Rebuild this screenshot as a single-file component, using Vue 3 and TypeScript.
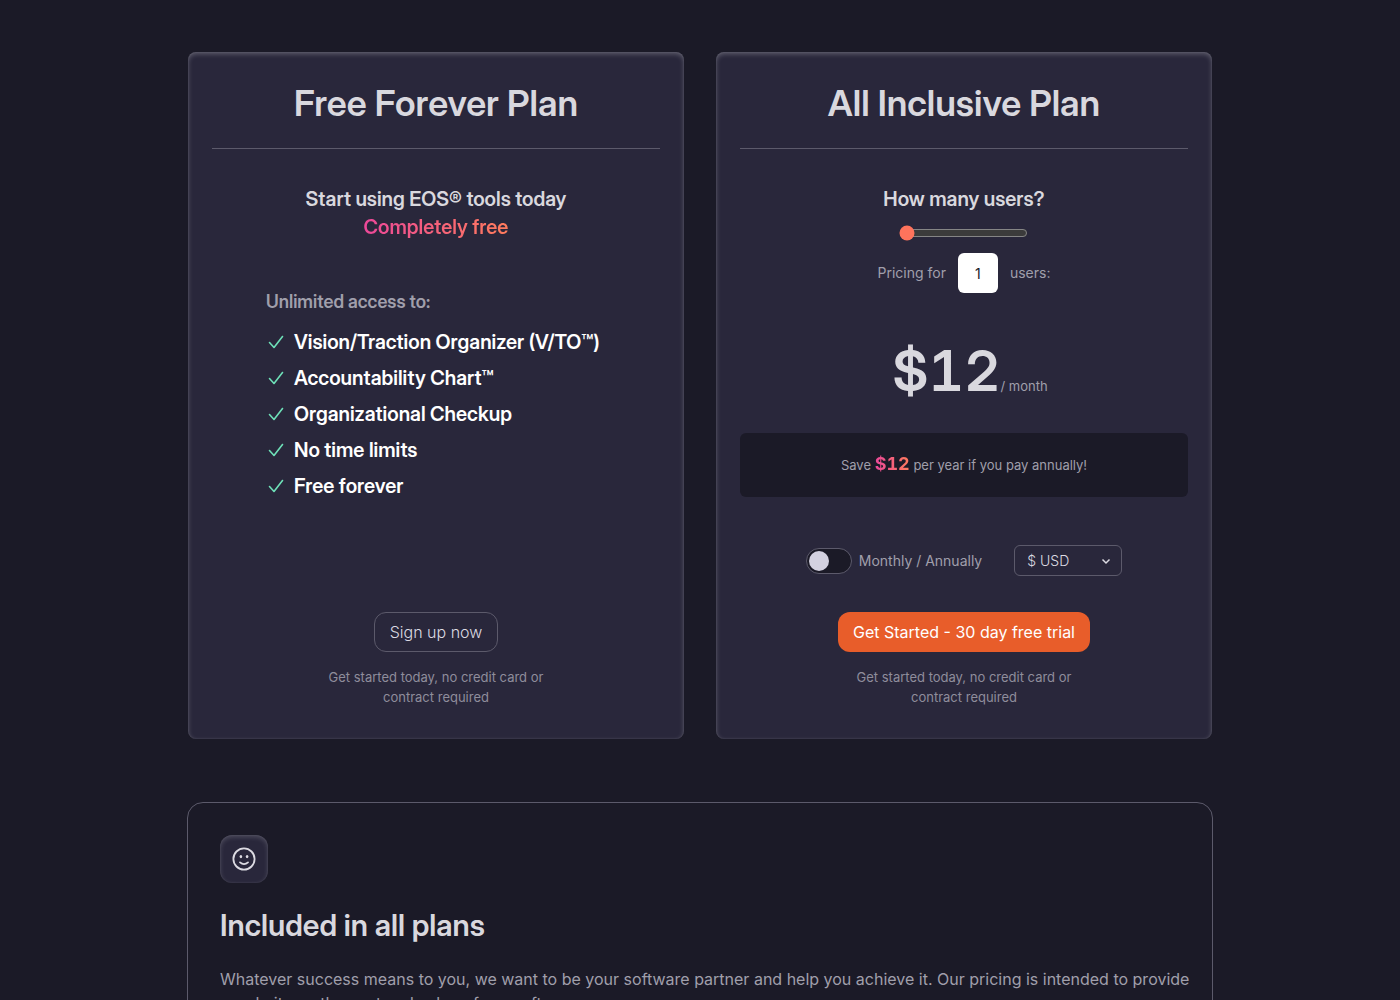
<script setup lang="ts">
import { computed, ref } from 'vue'

const features: string[] = [
  'Vision/Traction Organizer (V/TO™)',
  'Accountability Chart™',
  'Organizational Checkup',
  'No time limits',
  'Free forever',
]

const users = ref<number>(1)
const annually = ref<boolean>(false)
const currency = ref<string>('$ USD')
const symbol = computed<string>(() => currency.value.split(' ')[0])
const price = computed<number>(() => users.value * 12)
</script>

<template>
  <main class="page">
    <div class="plans">
      <section class="plan" aria-labelledby="free-title">
        <h2 id="free-title" class="plan-title">Free Forever Plan</h2>
        <div class="intro">
          <p class="lead">Start using EOS® tools today</p>
          <p class="lead"><span class="gradient">Completely free</span></p>
        </div>
        <div class="access">
          <h3 class="access-title">Unlimited access to:</h3>
          <ul class="features">
            <li v-for="feature in features" :key="feature" class="feature">
              <svg class="check" viewBox="0 0 20 20" aria-hidden="true">
                <path d="M3.5 10.5 8 15.5 16.5 4.5" />
              </svg>
              <span>{{ feature }}</span>
            </li>
          </ul>
        </div>
        <div class="action">
          <button type="button" class="btn btn-outline">Sign up now</button>
          <p class="note">Get started today, no credit card or contract required</p>
        </div>
      </section>

      <section class="plan" aria-labelledby="all-title">
        <h2 id="all-title" class="plan-title">All Inclusive Plan</h2>
        <div class="intro">
          <label class="lead" for="users-range">How many users?</label>
          <input id="users-range" v-model.number="users" class="range" type="range" min="1" max="250" />
          <div class="count">
            <label for="users-count">Pricing for</label>
            <input id="users-count" v-model.number="users" class="count-input" type="text" />
            <span>users:</span>
          </div>
        </div>
        <p class="price"><span class="amount">{{ symbol }}{{ price }}</span><span class="small">/ month</span></p>
        <p class="saving">Save <strong class="saving-amount gradient">{{ symbol }}{{ price }}</strong> per year if you pay annually!</p>
        <div class="options">
          <label class="billing">
            <input v-model="annually" class="switch" type="checkbox" />
            <span>Monthly / Annually</span>
          </label>
          <div class="currency">
            <select v-model="currency" class="select" aria-label="Currency">
              <option>$ USD</option>
              <option>€ EUR</option>
              <option>£ GBP</option>
            </select>
            <svg class="chevron" viewBox="0 0 10 10" aria-hidden="true">
              <path d="M1.5 3.5 5 7 8.5 3.5" />
            </svg>
          </div>
        </div>
        <div class="action">
          <button type="button" class="btn btn-primary">Get Started - 30 day free trial</button>
          <p class="note">Get started today, no credit card or contract required</p>
        </div>
      </section>
    </div>

    <section class="included">
      <div class="badge">
        <svg class="smile" viewBox="0 0 24 24" aria-hidden="true">
          <circle cx="12" cy="12" r="10.6" />
          <path d="M8 15.4Q12 18.8 16 15.4" />
          <ellipse class="eye" cx="8.9" cy="9.6" rx="1.3" ry="1.7" />
          <ellipse class="eye" cx="15.1" cy="9.6" rx="1.3" ry="1.7" />
        </svg>
      </div>
      <h2 class="included-title">Included in all plans</h2>
      <p class="included-text">
        Whatever success means to you, we want to be your software partner and help you achieve it. Our pricing is intended to provide a website on the cost and value of our software.
      </p>
    </section>
  </main>
</template>

<style>
body {
  margin: 0;
  background: #1b1a27;
}
</style>

<style scoped>
.page {
  box-sizing: border-box;
  height: 100vh;
  overflow: hidden;
  padding: 52px 24px 0;
  background: #1b1a27;
  color: #a09fab;
  font-family: Inter, "Liberation Sans", sans-serif;
  font-size: 14px;
  line-height: 20px;
}

h2,
h3,
p,
ul {
  margin: 0;
  padding: 0;
}

.plan-title,
.lead,
.access-title,
.feature,
.amount,
.included-title {
  font-family: "Inter Display", Inter, "Liberation Sans", sans-serif;
  font-variation-settings: "opsz" 32;
  font-weight: 600;
}

.plans {
  display: grid;
  grid-template-columns: 1fr 1fr;
  gap: 32px;
  max-width: 1024px;
  margin: 0 auto;
}

.plan {
  display: flex;
  flex-direction: column;
  align-items: center;
  padding: 24px 24px 32px;
  border-radius: 8px;
  background: #29273b;
  box-shadow: inset 0 2px 5px #ffffff40, inset 0 0 2px #ffffff20;
}

.plan-title {
  align-self: stretch;
  padding: 5px 0 23px;
  border-bottom: 1px solid #5c5a6b;
  color: #d9d8de;
  font-size: 36px;
  line-height: 44px;
  text-align: center;
}

.intro {
  display: flex;
  flex-direction: column;
  align-items: center;
  padding-top: 36px;
}

.lead {
  color: #d9d8de;
  font-size: 20px;
  line-height: 28px;
}

.gradient {
  background: linear-gradient(90deg, #ec4899, #ff7b5c);
  background-clip: text;
  color: transparent;
}

.access {
  min-width: 340px;
  padding-top: 48px;
}

.access-title {
  font-size: 18px;
  line-height: 26px;
}

.features {
  display: flex;
  flex-direction: column;
  gap: 8px;
  padding-top: 13px;
  list-style: none;
}

.feature {
  display: flex;
  align-items: center;
  gap: 8px;
  color: #ffffff;
  font-size: 20px;
  line-height: 28px;
}

.check {
  width: 20px;
  height: 20px;
  fill: none;
  stroke: #6ee0b8;
  stroke-width: 1.6;
  stroke-linecap: round;
  stroke-linejoin: round;
}

.range {
  width: 129px;
  height: 16px;
  margin: 12px 0;
  accent-color: #ff735c;
  color-scheme: dark;
}

.count {
  display: flex;
  align-items: center;
  gap: 12px;
}

.count-input {
  box-sizing: border-box;
  width: 40px;
  height: 40px;
  padding: 0;
  border: 0;
  border-radius: 6px;
  background: #ffffff;
  color: #1b1a27;
  font: inherit;
  text-align: center;
}

.price {
  display: flex;
  align-items: baseline;
  padding: 48px 0 0 12px;
}

.amount {
  color: #d9d8de;
  font-size: 56px;
  font-variant-numeric: tabular-nums;
  line-height: 60px;
}

.small {
  font-size: 13px;
}

.saving {
  align-self: stretch;
  margin-top: 32px;
  padding: 20px 16px;
  border-radius: 6px;
  background: #1b1a27;
  font-size: 13px;
  line-height: 24px;
  text-align: center;
}

.saving-amount {
  font-size: 18px;
  font-variant-numeric: tabular-nums;
  line-height: 20px;
}

.options {
  display: flex;
  align-items: center;
  gap: 32px;
  padding-top: 48px;
}

.billing {
  display: flex;
  align-items: center;
  gap: 7px;
}

.switch {
  box-sizing: border-box;
  width: 46px;
  height: 26px;
  margin: 0;
  padding: 2px;
  border: 1px solid #5c5a6b;
  border-radius: 13px;
  background: #1b1a27;
  appearance: none;
}

.switch::before {
  display: block;
  width: 20px;
  height: 20px;
  border-radius: 50%;
  background: #d3d1e0;
  content: "";
}

.switch:checked::before {
  margin-left: auto;
}

.currency {
  position: relative;
}

.select {
  box-sizing: border-box;
  display: block;
  width: 108px;
  height: 31px;
  padding: 0 12px;
  border: 1px solid #5c5a6b;
  border-radius: 6px;
  background: transparent;
  color: #dcdbe2;
  font: inherit;
  font-weight: 300;
  appearance: none;
}

.chevron {
  position: absolute;
  top: 11px;
  right: 11px;
  width: 10px;
  height: 10px;
  fill: none;
  stroke: #dcdbe2;
  stroke-width: 1.5;
  pointer-events: none;
}

.action {
  display: flex;
  flex-direction: column;
  align-items: center;
  margin-top: auto;
  padding-top: 36px;
}

.btn {
  box-sizing: border-box;
  height: 40px;
  padding: 0 15px;
  border: 0;
  border-radius: 12px;
  font: inherit;
  font-size: 16px;
}

.btn-outline {
  border: 1px solid #5c5a6b;
  background: transparent;
  color: #dcdbe2;
  font-weight: 300;
}

.btn-primary {
  background: #e85d2a;
  color: #ffffff;
}

.note {
  width: 240px;
  margin-top: 15px;
  color: #8f8d9b;
  font-size: 13px;
  text-align: center;
}

.included {
  max-width: 976px;
  margin: 63px auto 0;
  padding: 32px 16px 64px 32px;
  border: 1px solid #5c5a6b;
  border-radius: 16px;
}

.badge {
  display: grid;
  place-items: center;
  width: 48px;
  height: 48px;
  border-radius: 12px;
  background: #29273b;
  box-shadow: inset 0 2px 5px #ffffff30, inset 0 0 2px #ffffff18;
}

.smile {
  width: 24px;
  height: 24px;
  fill: none;
  stroke: #dcdbe2;
  stroke-width: 1.8;
  stroke-linecap: round;
}

.eye {
  fill: #dcdbe2;
  stroke: none;
}

.included-title {
  margin-top: 24px;
  color: #d9d8de;
  font-size: 30px;
  line-height: 36px;
}

.included-text {
  margin-top: 24px;
  font-size: 16px;
  line-height: 24px;
}
</style>
